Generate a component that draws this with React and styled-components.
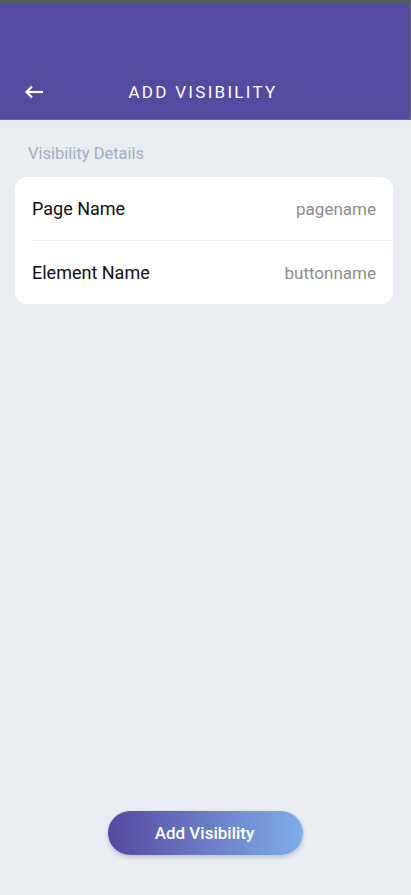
import React from "react";
import styled, { createGlobalStyle } from "styled-components";

const GlobalStyle = createGlobalStyle`
  html, body {
    margin: 0;
    padding: 0;
    background: #eaedf2;
    font-family: Roboto, "Noto Sans", sans-serif;
  }
`;

const Screen = styled.div`
  width: 411px;
  height: 895px;
  display: flex;
  flex-direction: column;
  background: #eaedf2;
  box-sizing: border-box;
`;

const StatusStrip = styled.div`
  height: 4px;
  background: #4f5c66;
`;

const Header = styled.div`
  height: 116px;
  background: #544aa0;
  border-bottom: 1px solid #6b6b7a;
  border-right: 1px solid #6b6b7a;
  box-sizing: border-box;
  display: flex;
  align-items: flex-end;
  padding: 0 0 17px 24px;
`;

const BackButton = styled.button`
  border: none;
  background: none;
  padding: 0;
  width: 20px;
  height: 20px;
  display: flex;
  align-items: center;
  cursor: pointer;
`;

const Title = styled.h1`
  flex: 1;
  margin: 0 0 0 -20px;
  text-align: center;
  color: #ffffff;
  font-size: 17px;
  font-weight: 400;
  letter-spacing: 2.3px;
  line-height: 20px;
  padding-right: 28px;
`;

const Content = styled.div`
  flex: 1;
  display: flex;
  flex-direction: column;
  padding: 24px 18px 0 15px;
`;

const SectionLabel = styled.div`
  color: #a3aec2;
  font-size: 16.5px;
  padding-left: 13px;
  line-height: 20px;
  margin-bottom: 13px;
`;

const Card = styled.div`
  background: #ffffff;
  border-radius: 12px;
  padding-left: 17px;
`;

const Row = styled.div`
  height: 63px;
  display: flex;
  align-items: center;
  justify-content: space-between;
  padding-right: 17px;
  border-bottom: ${(p) => (p.last ? "none" : "1px solid #eceef1")};
`;

const RowLabel = styled.span`
  color: #111111;
  font-size: 18px;
`;

const RowValue = styled.span`
  color: #8c8c8c;
  font-size: 17px;
`;

const Footer = styled.div`
  display: flex;
  justify-content: center;
  padding-bottom: 40px;
`;

const PrimaryButton = styled.button`
  width: 195px;
  height: 44px;
  border: none;
  border-radius: 22px;
  background: linear-gradient(90deg, #5548a0 0%, #6a7cc6 50%, #7eaeea 100%);
  color: #ffffff;
  font-family: Roboto, sans-serif;
  font-size: 17px;
  font-weight: 500;
  padding: 0 2px 0 0;
  box-shadow: 0 2px 5px rgba(0, 0, 0, 0.2);
  cursor: pointer;
`;

const ArrowIcon = () => (
  <svg width="20" height="14" viewBox="0 0 20 14" fill="none">
    <path d="M19 7H3" stroke="#fff" strokeWidth="2.2" />
    <path d="M8 1.5L2.5 7L8 12.5" stroke="#fff" strokeWidth="2.2" />
  </svg>
);

const rows = [
  { label: "Page Name", value: "pagename" },
  { label: "Element Name", value: "buttonname" },
];

export default function App() {
  return (
    <Screen>
      <GlobalStyle />
      <StatusStrip />
      <Header>
        <BackButton>
          <ArrowIcon />
        </BackButton>
        <Title>ADD VISIBILITY</Title>
      </Header>
      <Content>
        <SectionLabel>Visibility Details</SectionLabel>
        <Card>
          {rows.map((r, i) => (
            <Row key={r.label} last={i === rows.length - 1}>
              <RowLabel>{r.label}</RowLabel>
              <RowValue>{r.value}</RowValue>
            </Row>
          ))}
        </Card>
      </Content>
      <Footer>
        <PrimaryButton>Add Visibility</PrimaryButton>
      </Footer>
    </Screen>
  );
}
